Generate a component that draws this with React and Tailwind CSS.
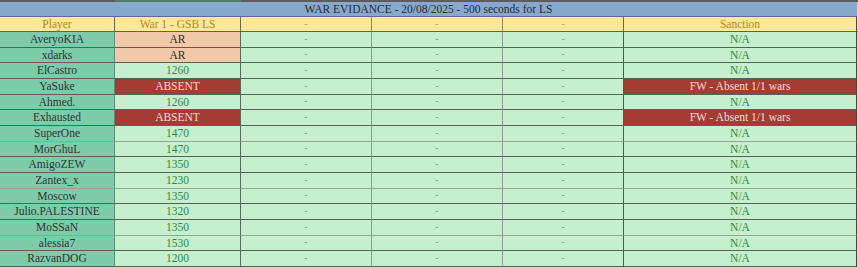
const rows = [
  { name: "AveryoKIA", war: "AR" },
  { name: "xdarks", war: "AR" },
  { name: "ElCastro", war: "1260" },
  { name: "YaSuke", war: "ABSENT" },
  { name: "Ahmed.", war: "1260" },
  { name: "Exhausted", war: "ABSENT" },
  { name: "SuperOne", war: "1470", light: true },
  { name: "MorGhuL", war: "1470" },
  { name: "AmigoZEW", war: "1350" },
  { name: "Zantex_x", war: "1230", light: true },
  { name: "Moscow", war: "1350" },
  { name: "Julio.PALESTINE", war: "1320" },
  { name: "MoSSaN", war: "1350", light: true },
  { name: "alessia7", war: "1530" },
  { name: "RazvanDOG", war: "1200" },
];

const cols = "grid grid-cols-[115px_126px_131px_131px_121px_233px]";

const WarCell = ({ value, line }) => {
  if (value === "AR")
    return <div className={`bg-[#f1c9a9] text-[#2b2b2b] border-r border-[#5b6b5e] ${line} flex items-center justify-center pt-px`}>AR</div>;
  if (value === "ABSENT")
    return <div className={`bg-[#a33c33] text-[#f6dcd6] border-r border-[#5b6b5e] ${line} flex items-center justify-center pt-px`}>ABSENT</div>;
  return <div className={`bg-[#c6efce] text-[#2f8a3c] border-r border-[#5b6b5e] ${line} flex items-center justify-center pt-px`}>{value}</div>;
};

const Dash = ({ line, edge }) => (
  <div className={`bg-[#c6efce] text-[#4f9e55] text-[9px] border-r ${edge} ${line} flex items-center justify-center`}>-</div>
);

export default function App() {
  return (
    <div className="w-[858px] h-[267px] overflow-hidden bg-[#d9d9d9] font-['Liberation_Serif'] text-[11.5px] leading-none">
      <div className="flex h-[2px] bg-[#5c5c5c]">
        <div className="w-[115px]" />
        <div className="w-[126px] bg-[#4f7d68]" />
      </div>
      <div className="w-[857px] h-[15px] bg-[#87a9cd] border-b border-[#5d6f80] flex items-center justify-center pt-px text-[#262c33] text-[11.5px]">
        WAR EVIDANCE - 20/08/2025 - 500 seconds for LS
      </div>
      <div className={`${cols} h-[15px] bg-[#fee79b] text-[#b3852c] border-b border-[#5b6356]`}>
        <div className="border-r border-[#6b6a55] flex items-center justify-center pt-px">Player</div>
        <div className="border-r border-[#6b6a55] flex items-center justify-center pt-px">War 1 - GSB LS</div>
        <div className="border-r border-[#8f8a62] flex items-center justify-center text-[9px]">-</div>
        <div className="border-r border-[#8f8a62] flex items-center justify-center text-[9px]">-</div>
        <div className="border-r border-[#6b6a55] flex items-center justify-center text-[9px]">-</div>
        <div className="border-r border-[#444] flex items-center justify-center pt-px">Sanction</div>
      </div>
      {rows.map((r) => {
        const line = r.light ? "border-b border-b-[#93a596]" : "border-b border-b-[#55625a]";
        const absent = r.war === "ABSENT";
        return (
          <div key={r.name} className={`${cols} h-[15.67px]`}>
            <div className={`bg-[#7dcbab] text-[#2b3631] border-r border-[#5a8f7a] ${line} flex items-center justify-center pt-px`}>
              {r.name}
            </div>
            <WarCell value={r.war} line={line} />
            <Dash line={line} edge="border-r-[#8a9c8d]" />
            <Dash line={line} edge="border-r-[#8a9c8d]" />
            <Dash line={line} edge="border-r-[#4d5a50]" />
            {absent ? (
              <div className={`bg-[#a33c33] text-[#f6dcd6] border-r border-r-[#444] ${line} flex items-center justify-center pt-px`}>
                FW - Absent 1/1 wars
              </div>
            ) : (
              <div className={`bg-[#c6efce] text-[#2f8a3c] border-r border-r-[#444] ${line} flex items-center justify-center pt-px`}>
                N/A
              </div>
            )}
          </div>
        );
      })}
    </div>
  );
}
